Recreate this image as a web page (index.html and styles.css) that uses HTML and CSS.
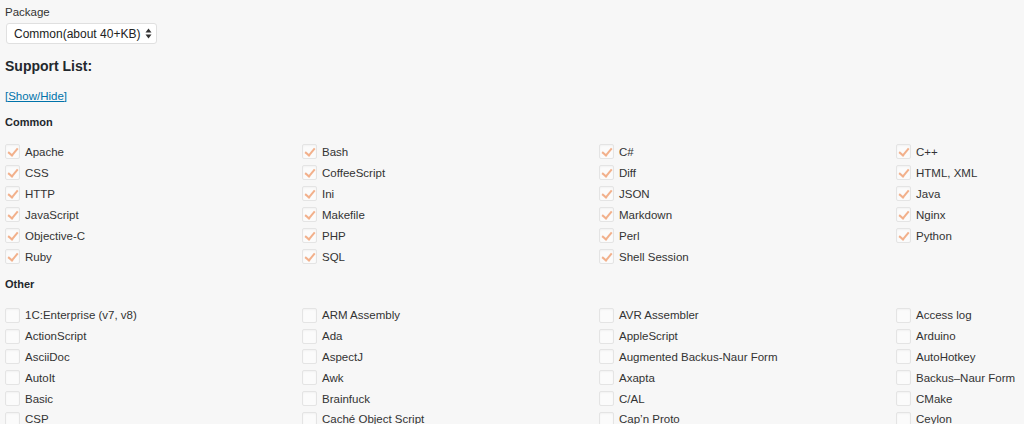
FILE: index.html
```html
<!DOCTYPE html>
<html lang="en">
<head>
  <meta charset="UTF-8" />
  <title>Highlight Settings</title>
  <link rel="stylesheet" href="styles.css">
</head>
<body>

  <div class="field">
    <label class="field-label" for="package">Package</label>
    <div class="select">
      <span class="select-value">Common(about 40+KB)</span>
      <svg class="select-arrows" width="7" height="11" viewBox="0 0 7 11">
        <path d="M0.5 4.5 L3.5 0.5 L6.5 4.5 Z" fill="#333"/>
        <path d="M0.5 6.5 L3.5 10.5 L6.5 6.5 Z" fill="#333"/>
      </svg>
    </div>
  </div>

  <h2 class="section-title">Support List:</h2>
  <a class="toggle" href="#">[Show/Hide]</a>

  <h3 class="group-title">Common</h3>
  <div class="lang-grid">
    <label class="lang"><span class="box checked"></span>Apache</label>
    <label class="lang"><span class="box checked"></span>Bash</label>
    <label class="lang"><span class="box checked"></span>C#</label>
    <label class="lang"><span class="box checked"></span>C++</label>
    <label class="lang"><span class="box checked"></span>CSS</label>
    <label class="lang"><span class="box checked"></span>CoffeeScript</label>
    <label class="lang"><span class="box checked"></span>Diff</label>
    <label class="lang"><span class="box checked"></span>HTML, XML</label>
    <label class="lang"><span class="box checked"></span>HTTP</label>
    <label class="lang"><span class="box checked"></span>Ini</label>
    <label class="lang"><span class="box checked"></span>JSON</label>
    <label class="lang"><span class="box checked"></span>Java</label>
    <label class="lang"><span class="box checked"></span>JavaScript</label>
    <label class="lang"><span class="box checked"></span>Makefile</label>
    <label class="lang"><span class="box checked"></span>Markdown</label>
    <label class="lang"><span class="box checked"></span>Nginx</label>
    <label class="lang"><span class="box checked"></span>Objective-C</label>
    <label class="lang"><span class="box checked"></span>PHP</label>
    <label class="lang"><span class="box checked"></span>Perl</label>
    <label class="lang"><span class="box checked"></span>Python</label>
    <label class="lang"><span class="box checked"></span>Ruby</label>
    <label class="lang"><span class="box checked"></span>SQL</label>
    <label class="lang"><span class="box checked"></span>Shell Session</label>
  </div>

  <h3 class="group-title other">Other</h3>
  <div class="lang-grid other-grid">
    <label class="lang"><span class="box"></span>1C:Enterprise (v7, v8)</label>
    <label class="lang"><span class="box"></span>ARM Assembly</label>
    <label class="lang"><span class="box"></span>AVR Assembler</label>
    <label class="lang"><span class="box"></span>Access log</label>
    <label class="lang"><span class="box"></span>ActionScript</label>
    <label class="lang"><span class="box"></span>Ada</label>
    <label class="lang"><span class="box"></span>AppleScript</label>
    <label class="lang"><span class="box"></span>Arduino</label>
    <label class="lang"><span class="box"></span>AsciiDoc</label>
    <label class="lang"><span class="box"></span>AspectJ</label>
    <label class="lang"><span class="box"></span>Augmented Backus-Naur Form</label>
    <label class="lang"><span class="box"></span>AutoHotkey</label>
    <label class="lang"><span class="box"></span>AutoIt</label>
    <label class="lang"><span class="box"></span>Awk</label>
    <label class="lang"><span class="box"></span>Axapta</label>
    <label class="lang"><span class="box"></span>Backus–Naur Form</label>
    <label class="lang"><span class="box"></span>Basic</label>
    <label class="lang"><span class="box"></span>Brainfuck</label>
    <label class="lang"><span class="box"></span>C/AL</label>
    <label class="lang"><span class="box"></span>CMake</label>
    <label class="lang"><span class="box"></span>CSP</label>
    <label class="lang"><span class="box"></span>Caché Object Script</label>
    <label class="lang"><span class="box"></span>Cap’n Proto</label>
    <label class="lang"><span class="box"></span>Ceylon</label>
  </div>

</body>
</html>
```

FILE: styles.css
```css
html {
  overflow: hidden;
}
body {
  background-color: #f7f7f7;
  color: #333;
  font-family: "Liberation Sans", Arial, sans-serif;
  font-size: 11.5px;
  margin: 0;
  padding: 5px 5px 0;
  overflow: hidden;
}
.field-label {
  display: block;
  line-height: 14px;
}
.select {
  display: flex;
  align-items: center;
  justify-content: space-between;
  box-sizing: border-box;
  width: 151px;
  height: 21px;
  margin-top: 4px;
  margin-left: 1px;
  padding: 0 4px 0 7px;
  background-color: #fff;
  border: 1px solid #e0e0e0;
  border-radius: 3px;
  font-size: 12px;
  color: #222;
  white-space: nowrap;
}
.section-title {
  margin: 12px 0 0;
  font-size: 14px;
  line-height: 20px;
  color: #23282d;
}
.toggle {
  display: block;
  width: max-content;
  margin-top: 13px;
  font-size: 11.5px;
  line-height: 14px;
  color: #0073aa;
}
.group-title {
  margin: 12px 0 0;
  font-size: 11px;
  line-height: 14px;
  color: #23282d;
}
.group-title.other {
  margin-top: 10px;
}
.lang-grid {
  display: grid;
  grid-template-columns: repeat(4, 297px);
  grid-auto-rows: 21px;
  margin-top: 12px;
}
.other-grid {
  grid-auto-rows: 20.8px;
  margin-top: 14px;
}
.lang {
  display: flex;
  align-items: center;
  white-space: nowrap;
}
.box {
  position: relative;
  box-sizing: border-box;
  width: 15px;
  height: 15px;
  margin-right: 5px;
  background-color: #fbfbfb;
  border: 1px solid #e4e4e4;
  border-radius: 2px;
  box-shadow: inset 0 1px 2px rgba(0, 0, 0, 0.04);
}
.box.checked::after {
  content: "";
  position: absolute;
  left: 4px;
  top: 1px;
  width: 4px;
  height: 8px;
  border-right: 2px solid #f2b08b;
  border-bottom: 2px solid #f2b08b;
  transform: rotate(40deg);
}
```
